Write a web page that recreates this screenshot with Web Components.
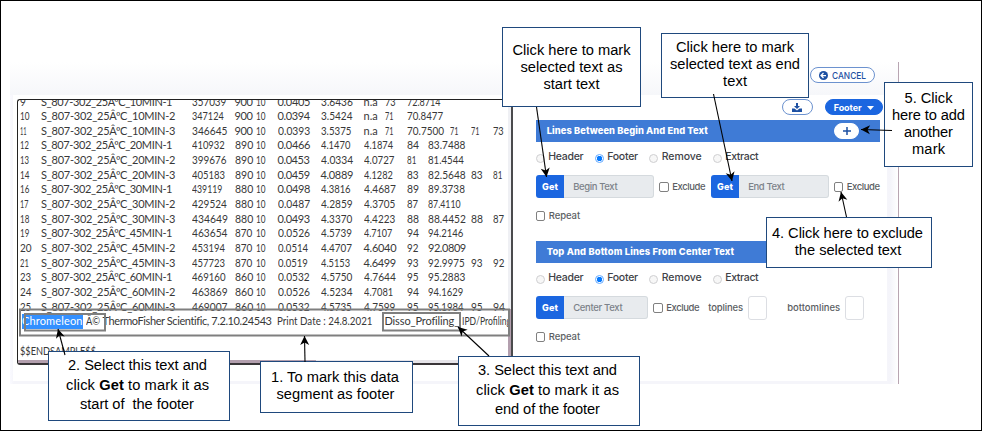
<!DOCTYPE html>
<html lang="en"><head><meta charset="utf-8"><title>Footer marking</title>
<style>
html,body{margin:0;background:#fff}
body{width:982px;height:431px;overflow:hidden;font-family:Inter,"Noto Sans",sans-serif;color:#3c3e42}
</style></head><body>
<guide-page></guide-page>
<script>
const define=(name,html,init)=>customElements.define(name,class extends HTMLElement{
  connectedCallback(){
    if(this.shadowRoot)return;
    const root=this.attachShadow({mode:'open'});
    const t=document.createElement('template');
    t.innerHTML=typeof html==='function'?html(this):html;
    root.append(t.content.cloneNode(true));
    if(init)init(this,root);
  }
});

/* Text fitted to the width in attribute w: by tracking, or by scaling when the tracking would be too tight */
define('fit-text','<style>:host{display:inline-block;white-space:pre;flex:none}span{display:inline-block;transform-origin:0 50%}</style><span><slot></slot></span>',(el,root)=>{
  const w=+el.getAttribute('w'),s=root.querySelector('span'),n=el.textContent.length;
  const nat=s.getBoundingClientRect().width;
  if(!w)return;
  el.style.width=w+'px';
  const ls=(w-nat)/Math.max(1,n-1);
  if(Math.abs(ls)>.45)s.style.transform=`scaleX(${(w/nat).toFixed(4)})`;
  else s.style.letterSpacing=ls.toFixed(3)+'px';
  s.style.marginRight='-10px';
});

const adv={0:.67,1:.36,2:.587,3:.612,4:.66,5:.62,6:.643,7:.55,8:.65,9:.643,'.':.27,n:.6,a:.68};
const numW=s=>([...s].reduce((a,c)=>a+(adv[c]||.6),0)*9.25).toFixed(1);

define('data-row',el=>{
  const v=el.getAttribute('values').split(',');
  const cols=[1,2,9,11,12,13,15,17];
  const tail=v[7]==='n.a'?[18,19,21,22,23]:[19,20,22,23];
  const pos=cols.concat(tail);
  return `<style>:host{display:grid;grid-template-columns:repeat(24,21.5px);height:14.67px;line-height:14.67px;align-items:center}</style>`+
  v.map((s,i)=>`<fit-text style="grid-column:${pos[i]};grid-row:1" w="${i===1?(s.endsWith('1')?131.5:134.5):numW(s)}">${s}</fit-text>`).join('');
});

const rows=[
['9','10MIN-1','357039','900','0.0405','3.6436','n.a','73','72.8714'],
['10','10MIN-2','347124','900','0.0394','3.5424','n.a','71','70.8477'],
['11','10MIN-3','346645','900','0.0393','3.5375','n.a','71','70.7500','71','71','73'],
['12','20MIN-1','410932','890','0.0466','4.1470','4.1874','84','83.7488'],
['13','20MIN-2','399676','890','0.0453','4.0334','4.0727','81','81.4544'],
['14','20MIN-3','405183','890','0.0459','4.0889','4.1282','83','82.5648','83','81'],
['16','30MIN-1','439119','880','0.0498','4.3816','4.4687','89','89.3738'],
['17','30MIN-2','429524','880','0.0487','4.2859','4.3705','87','87.4110'],
['18','30MIN-3','434649','880','0.0493','4.3370','4.4223','88','88.4452','88','87'],
['19','45MIN-1','463654','870','0.0526','4.5739','4.7107','94','94.2146'],
['20','45MIN-2','453194','870','0.0514','4.4707','4.6040','92','92.0809'],
['21','45MIN-3','457723','870','0.0519','4.5153','4.6499','93','92.9975','93','92'],
['23','60MIN-1','469160','860','0.0532','4.5750','4.7644','95','95.2883'],
['24','60MIN-2','463869','860','0.0526','4.5234','4.7081','94','94.1629'],
['25','60MIN-3','469007','860','0.0532','4.5735','4.7599','95','95.1984','95','94']];

define('data-viewer',`<style>
:host{display:grid;grid-template:1fr 3px/1fr 3px;box-sizing:border-box;width:496px;height:266px;border:1.5px solid #222;border-right:2px solid #4b4b4d;border-bottom:2px solid #3a3639;border-radius:3px;overflow:hidden;background:#fff;font:11px Lato,"Open Sans",sans-serif;color:#383838;margin:3.5px 0 0 4px}
.body{overflow:hidden;padding-left:1.5px;min-width:0;min-height:0}
.in{margin-top:-5px;width:520px}
.line{display:flex;height:14.67px;line-height:14.67px;white-space:pre}
.sel{background:#3390ff;color:#fff}
.v{background:linear-gradient(#eff0f4 0 80.5%,#b39fae 80.5%)}
.h{grid-column:1/3;background:linear-gradient(90deg,#b39fae 0 60.5%,#e6e4e9 60.5%)}
</style><div class="body"><div class="in">${rows.map(r=>{const v=[...r];v[1]='S_807-302_25ÂºC_'+r[1];v.splice(4,0,'10');return `<data-row values="${v.join(',')}"></data-row>`}).join('')}
<div class="line" style="padding-left:2.5px"><fit-text class="sel" w="60.5">Chromeleon</fit-text><fit-text w="14" style="margin-left:3px">Â©</fit-text><fit-text w="169.5" style="margin-left:3px">ThermoFisher Scientific, 7.2.10.24543</fit-text><fit-text w="95.5" style="margin-left:5px">Print Date : 24.8.2021</fit-text><fit-text w="74.5" style="margin-left:12px">Disso_Profiling_</fit-text><fit-text w="49" style="margin-left:2.5px">IPD/Profiling</fit-text></div>
<div class="line"></div><div class="line"><fit-text w="76">$$ENDSAMPLE$$</fit-text></div></div></div><div class="v"></div><div class="h"></div>`);

define('pill-button',`<style>
:host{display:flex;align-items:center;justify-content:center;box-sizing:border-box;height:16px;border:1px solid #6c92cf;border-radius:8px;background:#fff;color:#1d50a2;font-size:9.5px;font-weight:500;flex:none}
:host([solid]){background:#1b66e0;border-color:#1b66e0;color:#fff;font-weight:700;font-size:9px}
</style><slot></slot>`);

define('radio-option',`<style>:host{display:flex;align-items:center;flex:none;font-size:10.5px;font-weight:500;color:#404247}
i{box-sizing:border-box;width:9px;height:9px;border:1px solid #cfcfd1;border-radius:50%;margin-right:3.5px;margin-top:2px;background:#f7f7f7}
:host([on]) i{border:1px solid #64aaff;background:radial-gradient(circle,#087bff 0 2.5px,#fff 3px)}
::slotted(*){position:relative;top:-1px}
</style><i></i><slot></slot>`);
define('check-option',`<style>:host{display:flex;align-items:center;flex:none;font-size:9.5px;font-weight:500;color:#5b5e63}
i{box-sizing:border-box;width:9.5px;height:9.5px;border:1px solid #808080;border-radius:2px;margin-right:3.5px;background:#fff}
::slotted(*){position:relative;top:-.5px}</style><i></i><slot></slot>`);
define('get-field',`<style>:host{display:flex;height:23px;flex:none;font-size:9.5px;font-weight:500}
b{display:flex;align-items:center;justify-content:center;width:28.5px;background:#1b66e0;color:#fff;border-radius:3px 0 0 3px;font-weight:800;font-size:9px}
div{box-sizing:border-box;display:flex;align-items:center;flex:1;border:1px solid #d5dade;border-left:0;border-radius:0 3px 3px 0;background:#e8ebee;color:#7c8289;padding-left:9px}
</style><b><fit-text w="16">Get</fit-text></b><div><slot></slot></div>`);

define('mark-section',`<style>:host{display:block;width:344.5px;height:121px}
header{display:flex;align-items:center;height:21.7px;background:#3f7bd6;color:#fff;font-size:9.3px;font-weight:800;padding-left:11px}
.radios{display:flex;align-items:center;height:32px;padding-bottom:1.7px}
.fields{display:flex;height:23px;align-items:center}
.rep{display:flex;height:35px;align-items:center}
</style><header><slot name="title"></slot></header>
<div class="radios"><radio-option><fit-text w="35.5">Header</fit-text></radio-option><radio-option on style="margin-left:11px"><fit-text w="31">Footer</fit-text></radio-option><radio-option style="margin-left:11px"><fit-text w="40">Remove</fit-text></radio-option><radio-option style="margin-left:11px"><fit-text w="33.5">Extract</fit-text></radio-option></div>
<div class="fields"><slot></slot></div><div class="rep"><check-option><fit-text w="31.5">Repeat</fit-text></check-option></div>`);

define('app-window',`<style>
:host{display:flex;flex-direction:column;box-sizing:border-box;width:889px;height:322px;margin:62px 0 0 9.5px;border-right:1.5px solid #b8a5b2;background:linear-gradient(90deg,#fafaff,#f5f5fa 4px,#f5f5fa calc(100% - 11px),#f4f4fa calc(100% - 8px),#fff)}
.top{display:flex;height:33px;padding:5px 22.5px 0 0;box-sizing:border-box;justify-content:flex-end;background:linear-gradient(#fff,#f6f7fa)}
.card{display:flex;width:873.5px;height:286px;margin-left:3.5px;background:#fff}
.right{width:347px;margin-left:22.7px;padding-top:4px}
.bar{display:flex;justify-content:flex-end;gap:12px;height:21px}
.plus{margin-left:auto;margin-right:21px;width:25px;border-color:#fff}
.num{box-sizing:border-box;width:19px;height:24px;border:1px solid #dcdee3;border-radius:3px;flex:none}
.lbl{font-size:9.5px;font-weight:500;color:#5b5e63;position:relative;top:-.5px}
svg{flex:none}
</style>
<div class="top"><pill-button style="width:65px"><svg width="9" height="9" viewBox="0 0 18 18" style="margin-right:4px"><circle cx="9" cy="9" r="9" fill="#1d50a2"/><path d="M9 4L4 9l5 5M4.5 9H14" fill="none" stroke="#fff" stroke-width="2.5"/></svg><fit-text w="34">CANCEL</fit-text></pill-button></div>
<div class="card"><data-viewer></data-viewer><div class="right">
<div class="bar"><pill-button style="width:31px"><svg width="10" height="9" viewBox="0 0 20 18" fill="#1d50a2"><path d="M8 0h4v6h4l-6 6-6-6h4zM0 11h5l5 4 5-4h5v7H0z"/></svg></pill-button><pill-button solid style="width:58px"><fit-text w="28">Footer</fit-text><svg width="7" height="4" viewBox="0 0 7 4" style="margin:1px 0 0 5px"><path d="M0 0h7L3.5 4z" fill="#fff"/></svg></pill-button></div>
<mark-section><fit-text slot="title" w="161">Lines Between Begin And End Text</fit-text><pill-button slot="title" class="plus"><svg width="8" height="8" viewBox="0 0 8 8"><path d="M4 0v8M0 4h8" stroke="#1d50a2" stroke-width="1.5"/></svg></pill-button>
<get-field style="width:118.5px"><fit-text w="44.5">Begin Text</fit-text></get-field><check-option style="margin-left:5px"><fit-text w="33.5">Exclude</fit-text></check-option><get-field style="width:118px;margin-left:5px"><fit-text w="36.5">End Text</fit-text></get-field><check-option style="margin-left:5px"><fit-text w="33.5">Exclude</fit-text></check-option></mark-section>
<mark-section><fit-text slot="title" w="187.5">Top And Bottom Lines From Center Text</fit-text>
<get-field style="width:112.5px"><fit-text w="49.5">Center Text</fit-text></get-field><check-option style="margin-left:5px"><fit-text w="33.5">Exclude</fit-text></check-option><fit-text class="lbl" w="35" style="margin-left:8.5px">toplines</fit-text><div class="num" style="margin-left:5px"></div><fit-text class="lbl" w="53" style="margin-left:20px">bottomlines</fit-text><div class="num" style="margin-left:5px"></div></mark-section>
</div></div>`);

/* Annotation box placed over the window at x,y */
define('call-out',el=>{
  const [x,y,w,h]=el.getAttribute('box').split(',');
  return `<style>:host{position:absolute;left:${x}px;top:${y}px;width:${w}px;height:${h}px;box-sizing:border-box;border:1px solid #1f497d;background:#fff;color:#000;font:14.67px/${el.getAttribute('lh')||17}px "Liberation Sans",Arial,sans-serif;display:flex;flex-direction:column;align-items:center;padding-top:${el.getAttribute('pt')}px}</style><slot></slot>`;
});

const arrows=[[305,362,304.5,336],[65,355,58,329],[489,356,458,327],[536.5,107,546.5,177],[713.5,94,732,181],[892,130.5,861,129.5],[846.5,217,841,192]];
define('arrow-layer',`<style>:host{position:absolute;inset:0}svg{display:block}</style><svg width="982" height="431">
<g fill="none" stroke="#7f7f7f" stroke-width="2"><rect x="20" y="309.5" width="489" height="26"/><rect x="25" y="314" width="80" height="16.5"/><rect x="383" y="313" width="77" height="17.5"/></g>${arrows.map(([a,b,c,d])=>{
 const t=Math.atan2(d-b,c-a)*180/Math.PI;
 return `<path d="M${a} ${b}L${c} ${d}" stroke="#000" stroke-width="1.1"/><path transform="translate(${c} ${d}) rotate(${t})" d="M0 0L-9 -4.5L-6.5 0L-9 4.5Z"/>`}).join('')}</svg>`);

define('guide-page',`<style>:host{display:flow-root;position:relative;box-sizing:border-box;width:982px;height:431px;background:#fff;overflow:hidden}
.edge{position:absolute;inset:0;border:1px solid #000}
</style><app-window></app-window>
<call-out box="502,27,139,80" pt="14"><fit-text w="118">Click here to mark</fit-text><fit-text w="102">selected text as</fit-text><fit-text w="56">start text</fit-text></call-out>
<call-out box="661,33,148,65" pt="5"><fit-text w="118">Click here to mark</fit-text><fit-text w="130">selected text as end</fit-text><fit-text w="24">text</fit-text></call-out>
<call-out box="884,82,89,85" pt="7"><fit-text w="48">5. Click</fit-text><fit-text w="73">here to add</fit-text><fit-text w="49">another</fit-text><fit-text w="33">mark</fit-text></call-out>
<call-out box="766,217,166,51" pt="7"><fit-text w="151" style="margin-right:3px">4. Click here to exclude</fit-text><fit-text w="106.5" style="margin-right:2px">the selected text</fit-text></call-out>
<call-out box="48,351,182,70" pt="4" lh="19.5"><fit-text w="139" style="margin-right:3px">2. Select this text and</fit-text><fit-text w="143" style="margin-right:3px">click <b>Get</b> to mark it as</fit-text><fit-text w="114" style="margin-right:4px">start of  the footer</fit-text></call-out>
<call-out box="260,361,153,52" pt="7"><fit-text w="128" style="margin-right:3px">1. To mark this data</fit-text><fit-text w="118" style="margin-right:2px">segment as footer</fit-text></call-out>
<call-out box="458,356,182,70" pt="4" lh="19.5"><fit-text w="139" style="margin-right:3px">3. Select this text and</fit-text><fit-text w="143" style="margin-right:3px">click <b>Get</b> to mark it as</fit-text><fit-text w="105" style="margin-right:3px">end of the footer</fit-text></call-out>
<arrow-layer></arrow-layer><div class="edge"></div>`);
</script></body></html>
